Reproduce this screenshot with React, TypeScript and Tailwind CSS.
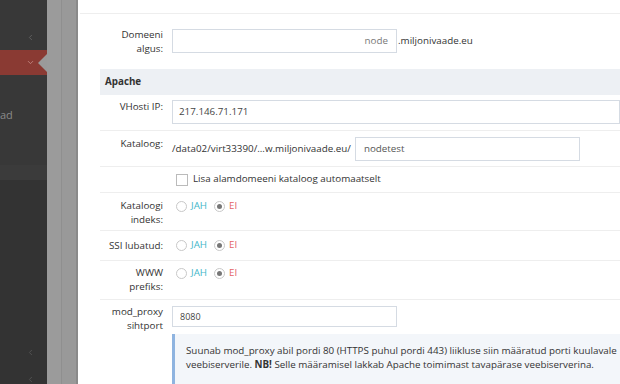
import { ChevronLeft, ChevronDown } from "lucide-react";

function Label({ lines }: { lines: string[] }) {
  return (
    <div className="w-[63px] shrink-0 text-right leading-[14px] text-[#333]">
      {lines.map((l) => (
        <div key={l} className="whitespace-nowrap">{l}</div>
      ))}
    </div>
  );
}

function Radio({ checked }: { checked?: boolean }) {
  return (
    <span className="flex h-[11px] w-[11px] items-center justify-center rounded-full border border-[#c8c8c8] bg-white">
      {checked && <span className="h-[5px] w-[5px] rounded-full bg-[#777]" />}
    </span>
  );
}

function YesNo() {
  return (
    <div className="flex h-[14px] items-center">
      <Radio />
      <span className="ml-[4px] text-[#3fb7c9]">JAH</span>
      <span className="ml-[7px]"><Radio checked /></span>
      <span className="ml-[4px] text-[#e46466]">EI</span>
    </div>
  );
}

export default function App() {
  return (
    <div
      className="flex h-[384px] w-[620px] overflow-hidden bg-white text-[9.8px]"
      style={{ fontFamily: '"Open Sans", "Noto Sans", sans-serif' }}
    >
      {/* dimmed sidebar */}
      <div className="flex w-[47px] shrink-0 flex-col bg-[#383838]">
        <div className="flex h-[53px] items-center justify-end pr-[12px] pt-[24px] text-[#6a6a6a]">
          <ChevronLeft size={9} strokeWidth={2} />
        </div>
        <div className="relative flex h-[27px] items-center justify-end bg-[#8a3a33] pr-[12px] text-[#c9938d]">
          <ChevronDown size={9} strokeWidth={2} />
          <span className="absolute right-0 top-[4px] h-0 w-0 border-y-[9px] border-r-[9px] border-y-transparent border-r-[#9a9a9a]" />
        </div>
        <div className="h-[95px] pt-[32px] text-[11px] text-[#8a8a8a]">
          <span>ad</span>
        </div>
        <div className="h-[17px] bg-[#3b3b3b]" />
        <div className="flex flex-1 flex-col items-end bg-[#333] pr-[12px] pt-[168px] text-[#5a5a5a]">
          <ChevronLeft size={9} strokeWidth={2} />
          <div className="mt-[18px]">
            <ChevronLeft size={9} strokeWidth={2} />
          </div>
        </div>
      </div>

      {/* dimmed page strip */}
      <div className="flex w-[31px] shrink-0">
        <div className="w-[15px] border-r border-[#8f8f8f] bg-[#9b9b9b]" />
        <div className="flex-1 border-r-2 border-[#8a8a8a] bg-[#999]" />
      </div>

      {/* panel */}
      <div className="flex flex-1 flex-col">
        <div className="ml-[2px] h-[14px] shrink-0 border-b border-[#eeeeee]" />
        <div className="ml-[22px] flex flex-col">
          {/* Domeeni algus */}
          <div className="flex h-[55px] shrink-0 items-start pt-[14px]">
            <Label lines={["Domeeni", "algus:"]} />
            <div className="ml-[9px] mt-[1px] flex items-center">
              <div className="flex h-[24px] w-[225px] items-center justify-end border border-[#d5dbe3] pr-[8px] text-[#777]">
                node
              </div>
              <span className="ml-[1px] text-[#333]">.miljonivaade.eu</span>
            </div>
          </div>

          {/* Apache header */}
          <div className="flex h-[26px] shrink-0 items-center bg-[#edf0f4] pl-[5px] font-bold text-[#333]">
            Apache
          </div>

          {/* VHosti IP */}
          <div className="flex h-[36px] shrink-0 items-start border-b border-[#eeeeee] pt-[5px]">
            <Label lines={["VHosti IP:"]} />
            <div className="ml-[9px] flex h-[24px] flex-1 items-center border border-[#d5dbe3] pl-[6px] text-[#444]">
              217.146.71.171
            </div>
          </div>

          {/* Kataloog */}
          <div className="flex h-[36px] shrink-0 items-start border-b border-[#eeeeee] pt-[6px]">
            <Label lines={["Kataloog:"]} />
            <div className="ml-[9px] flex items-center">
              <span className="whitespace-nowrap text-[#333]">/data02/virt33390/...w.miljonivaade.eu/</span>
              <div className="ml-[4px] flex h-[24px] w-[225px] items-center border border-[#d5dbe3] pl-[8px] text-[#555]">
                nodetest
              </div>
            </div>
          </div>

          {/* checkbox */}
          <div className="flex h-[26px] shrink-0 items-center border-b border-[#eeeeee] pl-[76px]">
            <span className="h-[12px] w-[12px] border border-[#bbb] bg-white" />
            <span className="ml-[5px] text-[#333]">Lisa alamdomeeni kataloog automaatselt</span>
          </div>

          {/* Kataloogi indeks */}
          <div className="flex h-[38px] shrink-0 items-start border-b border-[#eeeeee] pt-[6px]">
            <Label lines={["Kataloogi", "indeks:"]} />
            <div className="ml-[13px]">
              <YesNo />
            </div>
          </div>

          {/* SSI lubatud */}
          <div className="flex h-[30px] shrink-0 items-center border-b border-[#eeeeee]">
            <Label lines={["SSI lubatud:"]} />
            <div className="ml-[13px]">
              <YesNo />
            </div>
          </div>

          {/* WWW prefiks */}
          <div className="flex h-[39px] shrink-0 items-start border-b border-[#eeeeee] pt-[5px]">
            <Label lines={["WWW", "prefiks:"]} />
            <div className="ml-[13px]">
              <YesNo />
            </div>
          </div>

          {/* mod_proxy */}
          <div className="flex items-start pt-[5px]">
            <Label lines={["mod_proxy", "sihtport"]} />
            <div className="ml-[9px] mt-[1px] flex flex-1 flex-col">
              <div className="flex h-[21px] w-[225px] items-center border border-[#d5dbe3] pl-[7px] text-[9px] text-[#444]">
                8080
              </div>
              <div className="mt-[7px] border-l-[3px] border-[#8fb4e0] bg-[#f3f6fa] pb-[12px] pl-[11px] pt-[10px] leading-[14px] text-[#333]">
                <div className="whitespace-nowrap">
                  Suunab mod_proxy abil pordi 80 (HTTPS puhul pordi 443) liikluse siin määratud porti kuulavale
                </div>
                <div className="whitespace-nowrap">
                  veebiserverile. <b>NB!</b> Selle määramisel lakkab Apache toimimast tavapärase veebiserverina.
                </div>
              </div>
            </div>
          </div>
        </div>
      </div>
    </div>
  );
}
